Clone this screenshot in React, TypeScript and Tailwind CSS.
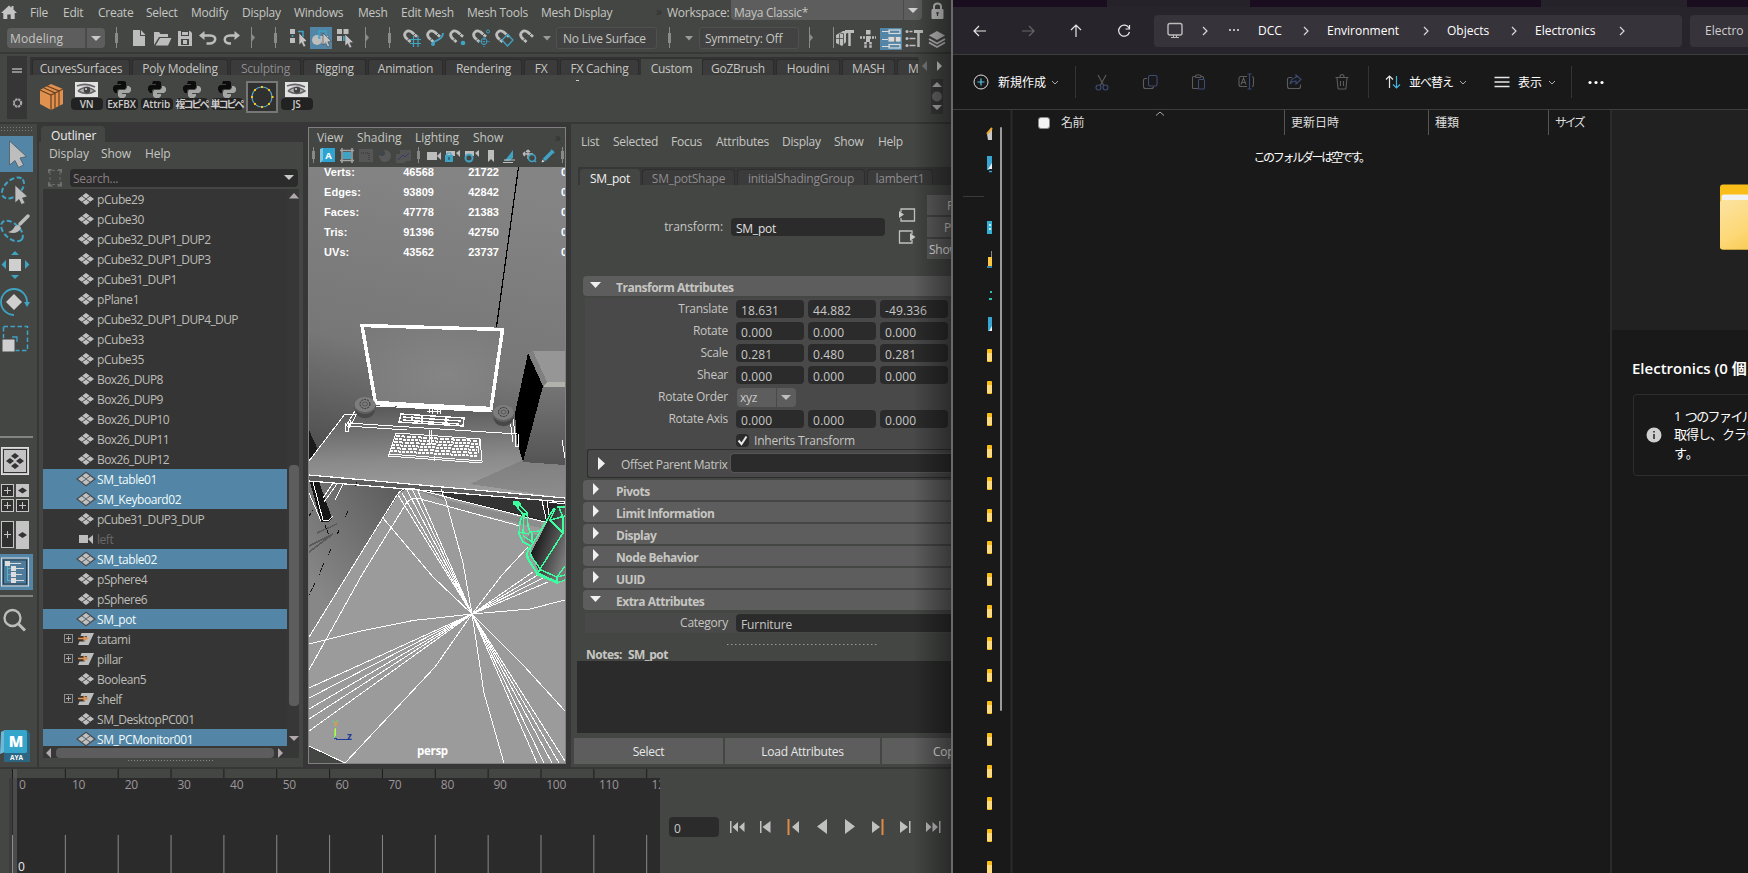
import React from "react";

type Kids = { children?: React.ReactNode };

/* Icon drawn in window coordinates: the view box starts at (x, y). */
function Ic({ x, y, w, h, children, className = "" }: { x: number; y: number; w: number; h: number; className?: string } & Kids) {
  return (
    <svg width={w} height={h} viewBox={`${x} ${y} ${w} ${h}`} className={"block shrink-0 " + className} fill="none">
      {children}
    </svg>
  );
}

const G = "#bdbdbd";
const T = "#3fa3c4";

/* ---------- Top menu ---------- */
const MENUS: [string, string][] = [
  ["File", "w-[33px]"], ["Edit", "w-[35px]"], ["Create", "w-[48px]"], ["Select", "w-[45px]"], ["Modify", "w-[51px]"],
  ["Display", "w-[52px]"], ["Windows", "w-[64px]"], ["Mesh", "w-[43px]"], ["Edit Mesh", "w-[66px]"], ["Mesh Tools", "w-[74px]"], ["Mesh Display", "w-[115px]"],
];

function MenuBar() {
  return (
    <div className="flex h-6 items-center">
      <Ic x={0} y={0} w={30} h={24}>
        <path d="M1 13 9 5.500l2.500 2.300V6h2v3.600L17 13h-2.300v6h-4v-4.500H7.300v4.500h-4v-6z" fill="#c4c4c4" />
      </Ic>
      {MENUS.map(([t, w]) => <span key={t} className={"shrink-0 pt-0.5 " + w}>{t}</span>)}
      <span className="w-[11px] shrink-0 text-[#2f2f2f]">»</span>
      <span className="w-[64px] shrink-0 pt-0.5">Workspace:</span>
      <div className="flex h-5 w-[191px] shrink-0 self-start items-center bg-[#5d5d5d] rounded-b-sm pl-[3px]">
        <span className="flex-1 pt-[6px]">Maya Classic*</span>
        <Ic x={903} y={0} w={19} h={20}><path d="M903.500 0v20" stroke="#4a4a4a" /><path d="M908 8h10l-5 5z" fill="#d0d0d0" /></Ic>
      </div>
      <Ic x={922} y={0} w={30} h={24}>
        <rect x={931.500} y={9} width={12} height={10} rx={1} fill="#c8c8c8" />
        <path d="M934 9V6.500a3.500 3 0 0 1 7 0V9" stroke="#c8c8c8" strokeWidth={2} />
        <path d="M937.500 12v4M936 13h3" stroke="#444" strokeWidth={1.200} />
      </Ic>
    </div>
  );
}

function Sep({ x }: { x: number }) {
  return <g fill="#8a8a8a"><rect x={x} y={27} width={1} height={21} /><rect x={x - 1} y={33} width={3} height={10} /></g>;
}
function Cursor({ x, y }: { x: number; y: number }) {
  return <path transform={`translate(${x} ${y})`} d="M0 0v12l2.600-2.300 2 4.300 2.200-1-2-4.200L8.500 8.500z" fill="#c4c4c4" stroke="#444" strokeWidth={0.600} />;
}
function Magnet({ x }: { x: number }) {
  return (
    <g transform={`translate(${x} 29.500)`}>
      <path d="M7.500 12.500L2.800 8.200C-0.500 3.500 4.500-0.500 8.800 2.600L14 7.200" stroke={G} strokeWidth={2.800} fill="none" />
      <path d="M4 11.200l2.600-2.600M10.200 6.300l2.600-2.600" stroke="#444" strokeWidth={0.900} />
    </g>
  );
}

function Toolbar() {
  return (
    <div className="flex h-7 items-center">
      <div className="ml-[7px] flex h-5 w-[98px] shrink-0 rounded-sm bg-[#5d5d5d]">
        <span className="flex flex-1 items-center pl-[3px] pt-0.5 tracking-[0.150px]">Modeling</span>
        <Ic x={85} y={28} w={20} h={20}><path d="M86 28v20" stroke="#444" strokeWidth={1.500} /><path d="M91 36h10l-5 5z" fill="#c8c8c8" /></Ic>
      </div>
      <Ic x={105} y={24} w={201} h={28}>
        <Sep x={116} />
        <path d="M133 30h7v6h5v10h-12z" fill={G} /><path d="M141 30l4.500 5H141z" fill={G} />
        <path d="M154 45V32h5l1.500 2H168v3h-9z" fill={G} /><path d="M160 38h11.500l-3.500 7.500H155.500z" fill={G} />
        <path d="M178 31h12l2 2v13h-14z" fill={G} /><rect x={181} y={31} width={8} height={5} fill="#444" /><rect x={182} y={32} width={6} height={3} fill={G} /><rect x={181} y={39} width={8} height={6} fill="#444" /><rect x={183} y={40} width={4} height={4} fill={G} />
        <path d="M203 35.500h7c8 0 6 8-.500 8h-3" stroke={G} strokeWidth={2.500} /><path d="M199 35.500l5.500-4.500v9z" fill={G} />
        <path d="M236 35.500h-6c-7 0-7 8 0 8h1" stroke={G} strokeWidth={2.500} /><path d="M240 35.500l-5.500-4.500v9z" fill={G} />
        <path d="M251.500 27v21" stroke="#8a8a8a" /><path d="M251 33l4 4.500-4 5z" fill="#8a8a8a" />
        <Sep x={275} />
        <g fill={G}><rect x={290} y={29} width={5} height={5} /><rect x={290} y={38} width={5} height={5} /></g>
        <path d="M298 31.500h5v6M292.500 35v2" stroke={T} strokeWidth={1.500} /><Cursor x={299} y={33} />
      </Ic>
      <Ic x={306} y={24} w={250} h={28}>
        <rect x={310} y={27} width={22} height={22} fill="#5285a6" />
        <circle cx={317} cy={40} r={5} fill={G} /><rect x={319} y={31} width={7} height={7} stroke={T} strokeWidth={1.500} /><path d="M320 36h8v8h-6z" fill={G} /><Cursor x={323} y={33} />
        <g fill={G}><rect x={337} y={29} width={5} height={5} /><rect x={343.500} y={29} width={5} height={5} /><rect x={337} y={36} width={5} height={5} /></g><rect x={343} y={36} width={4} height={5} fill={T} /><Cursor x={345} y={34} />
        <path d="M365.500 27v21" stroke="#8a8a8a" /><path d="M365 33l4 4.500-4 5z" fill="#8a8a8a" />
        <Sep x={389} />
        <Magnet x={403} /><path d="M410 39.500h11M410 43.500h11M413.500 36v11M418 36v11" stroke={T} strokeWidth={1.200} />
        <Magnet x={426} /><path d="M433 45c0-7 9-2 10-12" stroke={T} strokeWidth={2} /><circle cx={433} cy={44} r={2} fill={T} />
        <Magnet x={449} /><circle cx={463} cy={43} r={2.300} fill={T} />
        <Magnet x={472} /><circle cx={484} cy={41.500} r={3} stroke={T} fill="#444" /><circle cx={488} cy={31.500} r={1.500} stroke={T} /><path d="M484 36v11M478.500 41.500h11" stroke={T} strokeDasharray="1.500 1" />
        <Magnet x={495} /><path d="M502 40l5.500-5.500 5.500 5.500-5.500 6z" stroke={T} strokeWidth={1.300} />
        <Magnet x={519} />
        <path d="M543 36h8l-4 4.500z" fill="#9a9a9a" />
      </Ic>
      <div className="flex h-[22px] w-[101px] shrink-0 items-center rounded-[3px] border border-[#505050] bg-[#414241] pt-0.5 pl-[6px]">No Live Surface</div>
      <Ic x={657} y={24} w={42} h={28}><Sep x={669} /><path d="M685 36h8l-4 4.500z" fill="#9a9a9a" /></Ic>
      <div className="flex h-[22px] w-[100px] shrink-0 items-center rounded-[3px] border border-[#505050] bg-[#414241] pt-0.5 pl-[5px]">Symmetry: Off</div>
      <Ic x={799} y={24} w={153} h={28}>
        <path d="M809.500 27v21M833.500 27v21" stroke="#8a8a8a" /><path d="M809 33l4 4.500-4 5z" fill="#8a8a8a" />
        <path d="M836 35l7-4h6l-3 3v8l-4 4-6-3z" fill={G} /><path d="M836 38.500h7M839.500 34v11M843.500 34v11M839 32.500l5 1.500" stroke="#555" strokeWidth={0.900} /><path d="M845 31.500h9" stroke={G} strokeWidth={3} /><path d="M849.500 32v14" stroke={G} strokeWidth={2.500} />
        <rect x={866} y={30} width={4.500} height={4.500} fill={G} /><path d="M860 37.500h16" stroke={G} strokeWidth={2.500} strokeDasharray="2 1" /><path d="M868 36v6" stroke={G} strokeWidth={4} /><path d="M865.500 42v6M870.500 42v6" stroke={G} strokeWidth={2.500} strokeDasharray="2.500 0.800" />
        <rect x={880} y={28} width={22} height={22} fill="#5285a6" /><g stroke="#dadada" strokeWidth={1.200}><path d="M882 31.500h8M882 39.500h6M882 46.500h8" /><rect x={889} y={30} width={11} height={3.500} /><rect x={889} y={37.500} width={11} height={3.500} fill="#dadada" /><rect x={889} y={44.500} width={11} height={3.500} /></g><path d="M895 37v5" stroke="#444" />
        <g fill={G}><circle cx={907} cy={31.500} r={1.500} /><circle cx={907} cy={38.500} r={1.500} /><circle cx={907} cy={45.500} r={1.500} /></g><path d="M909.500 31.500h3M909.500 38.500h6M909.500 45.500h6" stroke={G} strokeWidth={1.500} /><path d="M914 31.500h9" stroke={G} strokeWidth={3} /><path d="M918.500 32v15" stroke={G} strokeWidth={2.500} />
        <path d="M929 35.500l8-4.500 8 4.500-8 4.500z" fill={G} /><path d="M929 39l8 4.500 8-4.500M929 42.500l8 4.500 8-4.500" stroke={G} strokeWidth={1.800} />
      </Ic>
    </div>
  );
}

/* ---------- Shelf ---------- */
const TABS: [string, string, string][] = [
  ["CurvesSurfaces", "w-[98px]", ""], ["Poly Modeling", "w-[96px]", ""], ["Sculpting", "w-[71px]", "text-[#8f8b8f]"], ["Rigging", "w-[63px]", ""],
  ["Animation", "w-[75px]", ""], ["Rendering", "w-[77px]", ""], ["FX", "w-[34px]", ""], ["FX Caching", "w-[79px]", ""], ["Custom", "w-[61px]", "active"],
  ["GoZBrush", "w-[72px]", ""], ["Houdini", "w-[64px]", ""], ["MASH", "w-[53px]", ""],
];

function Python({ label, jp }: { label: string; jp?: boolean }) {
  return (
    <div className="flex w-[35px] flex-col items-center">
      <svg width={18} height={18} viewBox="0 0 18 18">
        <path d="M5 1h6l2 1v5l-1 2H6L4 10v3H2L0 10V7l2-2h6V4H4z" fill="#0c0c0c" />
        <path d="M14 6h2l2 2v3l-2 2H9v1h4v2l-2 2H7l-2-2v-4l1-2h6l2-2z" fill="#a5a5a5" />
      </svg>
      <span className={"flex h-3 w-8 items-center justify-center whitespace-nowrap rounded-sm bg-[#222] font-bold text-[#ccc] text-[10px] " + (jp ? "tracking-[-2px] [font-family:'Noto_Sans_CJK_JP',sans-serif]" : "font-semibold tracking-[-0.100px]")}>{label}</span>
    </div>
  );
}
function Eye({ label }: { label: string }) {
  return (
    <div className="flex w-[35px] flex-col items-center">
      <svg width={23} height={16} viewBox="0 0 23 16" className="mt-0.5">
        <rect width={23} height={15} fill="#e2e2e2" />
        <path d="M2 4q9-4 18 1M3 9q8-7 17 0-8 5-17 0" stroke="#666" fill="#b5b5b5" strokeWidth={1.500} />
        <circle cx={12} cy={8} r={3.300} fill="#444" /><circle cx={11} cy={7} r={1} fill="#ddd" />
      </svg>
      <span className="flex h-3 w-8 items-center justify-center rounded-sm bg-[#222] text-[10px] font-semibold text-[#ccc]">{label}</span>
    </div>
  );
}

function Shelf() {
  return (
    <div className="flex h-[70px] border-t-2 border-[#383838]">
      <Ic x={0} y={54} w={30} h={68}>
        <rect x={7} y={56} width={20} height={63} fill="#363636" />
        <path d="M12 69h10M12 72h10" stroke="#aaa" strokeWidth={1.500} />
        <circle cx={17.500} cy={103} r={4} stroke="#aaa" strokeWidth={1.500} strokeDasharray="2.200 1" /><circle cx={17.500} cy={103} r={3.200} stroke="#aaa" />
      </Ic>
      <div className="w-[888px] shrink-0">
        <div className="mt-[3px] flex h-[18px] items-end bg-[#333333] pl-0.5">
          {TABS.map(([t, w, c]) =>
            c === "active" ? (
              <span key={t} className={"flex h-4 shrink-0 items-center justify-center bg-[#444644] pt-[3px] " + w}>{t}</span>
            ) : (
              <span key={t} className={"mr-0.5 flex h-4 shrink-0 items-center justify-center rounded-t-[3px] border-x border-t border-[#2c2c2c] bg-[#3a3b3a] pt-0.5 " + c + " " + w}>{t}</span>
            )
          )}
          <span className="flex h-4 flex-1 items-center rounded-tl-[3px] border-t border-l border-[#2c2c2c] bg-[#3a3b3a] pt-0.5 pl-2.5">M</span>
        </div>
        <div className="flex pt-[5px]">
          <Ic x={30} y={80} w={39} h={36}>
            <path d="M40 90l11-6 12 5v15l-12 6-11-6z" fill="#e0914f" />
            <path d="M40 90l11 5 12-6M44 88l11 5v15M47 86l12 5v15M51 95v15" stroke="#69401f" strokeWidth={1.200} />
          </Ic>
          <Eye label="VN" />
          <Python label="ExFBX" />
          <Python label="Attrib" />
          <Python label="複コピペ" jp />
          <Python label="単コピペ" jp />
          <Ic x={244} y={80} w={35} h={34}>
            <rect x={247} y={82} width={30} height={30} stroke="#777" strokeWidth={2} fill="#303030" />
            <circle cx={262} cy={97} r={10} stroke="#5a9fc0" strokeWidth={1.200} />
            <g fill="#f5c518"><rect x={261} y={86} width={2} height={2} /><rect x={261} y={106} width={2} height={2} /><rect x={251} y={96} width={2} height={2} /><rect x={271.500} y={96} width={2} height={2} /><rect x={254} y={89} width={2} height={2} /><rect x={268} y={89} width={2} height={2} /><rect x={254} y={103} width={2} height={2} /><rect x={268} y={103} width={2} height={2} /></g>
          </Ic>
          <Eye label="JS" />
          <Ic x={314} y={80} w={270} h={20}><path d="M576 80.500h3" stroke="#ccc" /></Ic>
        </div>
      </div>
      <Ic x={918} y={54} w={34} h={68}>
        <path d="M927 61v10l-5-5z" fill="#777" /><path d="M937 61v10l5-5z" fill="#ccc" />
        <rect x={931} y={79} width={12} height={35} fill="#383838" />
        <path d="M932 87h10l-5-5zM932 105h10l-5 5z" fill="#b0b0b0" /><circle cx={937} cy={96.500} r={5} fill="#666" />
      </Ic>
    </div>
  );
}

/* ---------- Tool column ---------- */
function ToolBox() {
  return (
    <Ic x={0} y={124} w={37} h={643} className="bg-[#444644]">
      <path d="M1 127.500h32M1 130.500h32" stroke="#777" strokeDasharray="1 2" />
      <rect y={136} width={33} height={36} fill="#5285a6" />
      <path d="M9.500 141v24l5.500-4.500 3.500 7 5-2.500-3.500-7 6.500-1.500z" fill={G} stroke="#4a5a66" strokeWidth={0.800} />
      <ellipse cx={13} cy={188} rx={13} ry={8} transform="rotate(-42 13 188)" stroke={T} strokeWidth={2} strokeDasharray="5 2.500" />
      <path d="M15 185v18l4-3.500 2.500 5 3.500-1.500-2.500-5 5-1.500z" fill={G} stroke="#444" strokeWidth={0.700} />
      <ellipse cx={12} cy={231} rx={13} ry={7.500} transform="rotate(42 12 231)" stroke={T} strokeWidth={2} strokeDasharray="5 2.500" />
      <path d="M20 224l8-8" stroke={G} strokeWidth={3.500} strokeLinecap="round" /><path d="M8 232q5-1 7-6l4-1 2 3c-2 5-8 6-13 4z" fill={G} />
      <rect x={9} y={259} width={12} height={12} fill="#cfcfcf" />
      <path d="M11 255h8l-4-4zM11 275h8l-4 4zM6 260v9l-4.500-4.500zM25 260v9l4.500-4.500z" fill={T} />
      <path d="M14 294l8 8-8 8-8-8z" fill="#cfcfcf" /><path d="M14 315a13 13 0 1 1 13-13" stroke={T} strokeWidth={1.800} /><path d="M24 302h6l-3 5z" fill={T} />
      <rect x={3.500} y={326.500} width={24} height={24} stroke={T} strokeWidth={1.500} strokeDasharray="4.500 2.500" /><rect x={2} y={339} width={13} height={13} fill="#cfcfcf" stroke="#444" /><path d="M12 337h5v5" stroke={T} strokeWidth={1.300} />
      <path d="M0 437h33" stroke="#999" strokeWidth={1.500} />
      <rect x={1.500} y={447.500} width={27} height={27} fill="#c4c4c4" stroke="#ddd" /><rect x={3.500} y={449.500} width={23} height={23} stroke="#333" />
      <path d="M15 453l4 3-4 3-4-3zM10 458l4 3-4 3-4-3zM20 458l4 3-4 3-4-3zM15 463l4 3-4 3-4-3z" fill="#333" />
      <g stroke="#c4c4c4" fill="#303030"><rect x={1.500} y={484.500} width={12} height={12} /><rect x={1.500} y={499.500} width={12} height={12} /><rect x={16.500} y={499.500} width={12} height={12} /><rect x={1.500} y={521.500} width={12} height={26} /></g>
      <rect x={16} y={484} width={13} height={13} fill="#c4c4c4" /><path d="M18 490.500l4.500-3 4.500 3-4.500 3z" fill="#333" />
      <rect x={16} y={521} width={13} height={28} fill="#c4c4c4" /><path d="M18 535l4.500-3 4.500 3-4.500 3z" fill="#333" />
      <path d="M4 490.500h7M7.500 487v7M4 505.500h7M7.500 502v7M19 505.500h7M22.500 502v7M4 534.500h7M7.500 531v7" stroke="#c4c4c4" />
      <rect y={554} width={33} height={36} fill="#5285a6" /><rect x={1.500} y={558} width={27} height={28} fill="#4f7c9b" stroke="#ddd" /><rect x={3.500} y={560} width={23} height={24} stroke="#2a3c4a" />
      <g stroke="#ddd"><path d="M9 563.500h12M15 568.500h9M15 574.500h7M15 580.500h9" /><path d="M7.500 566v15M7 574.500h5M7 580.500h5M7 568.500h5" stroke="#56b0cc" /></g>
      <g fill="#ddd"><rect x={5} y={561} width={5} height={5} /><rect x={11} y={566} width={5} height={5} /><rect x={11} y={572} width={5} height={5} /><rect x={11} y={578} width={5} height={5} /></g>
      <path d="M0 596h33" stroke="#999" strokeWidth={1.500} />
      <circle cx={12.500} cy={618} r={8} stroke={G} strokeWidth={2.300} /><path d="M18 623.500l7 7" stroke={G} strokeWidth={3} />
      <path d="M1 732l4-2v22l-5 2z" fill="#6db8d8" /><rect x={4} y={730} width={23} height={23} rx={1.500} fill="#35a5cc" /><path d="M27 730l3 3v29H4v-9h23z" fill="#2c6682" />
      <text x={16} y={747} fontFamily="Open Sans, sans-serif" fontWeight={800} fontSize={15} letterSpacing={0} textAnchor="middle" fill="#fff">M</text>
      <text x={16.500} y={759.500} fontFamily="Open Sans, sans-serif" fontWeight={700} fontSize={6.500} letterSpacing={0} textAnchor="middle" fill="#fff">AYA</text>
    </Ic>
  );
}

/* ---------- Outliner ---------- */
type Row = { n: string; s?: boolean; k?: "cam" | "grp" };
const ROWS: Row[] = [
  { n: "pCube29" }, { n: "pCube30" }, { n: "pCube32_DUP1_DUP2" }, { n: "pCube32_DUP1_DUP3" }, { n: "pCube31_DUP1" }, { n: "pPlane1" },
  { n: "pCube32_DUP1_DUP4_DUP" }, { n: "pCube33" }, { n: "pCube35" }, { n: "Box26_DUP8" }, { n: "Box26_DUP9" }, { n: "Box26_DUP10" },
  { n: "Box26_DUP11" }, { n: "Box26_DUP12" }, { n: "SM_table01", s: true }, { n: "SM_Keyboard02", s: true }, { n: "pCube31_DUP3_DUP" },
  { n: "left", k: "cam" }, { n: "SM_table02", s: true }, { n: "pSphere4" }, { n: "pSphere6" }, { n: "SM_pot", s: true }, { n: "tatami", k: "grp" },
  { n: "pillar", k: "grp" }, { n: "Boolean5" }, { n: "shelf", k: "grp" }, { n: "SM_DesktopPC001" }, { n: "SM_PCMonitor001", s: true },
];

function RowIcon({ r }: { r: Row }) {
  return (
    <svg width={54} height={20} viewBox="0 0 54 20" className="block shrink-0" fill="none">
      {r.k === "grp" && (
        <>
          <rect x={21.500} y={5.500} width={8} height={8} stroke="#8c8c8c" /><path d="M23 9.500h5M25.500 7v5" stroke="#aaa" />
          <path d="M38.500 4H51l-5.500 12H35l1.500-3.500h5L44 7h-6.500z" fill="#bdbdbd" /><path d="M35 9.500h8" stroke="#e0914f" strokeWidth={1.500} /><path d="M40.500 6.500l5 3-5 3z" fill="#e0914f" />
        </>
      )}
      {r.k === "cam" && <path d="M36 6h9v8h-9zM45 10l5-4v9z" fill="#bdbdbd" />}
      {!r.k && (
        <>
          {r.s && <path d="M43 2.500l10 7.500-10 7.500L33 10z" fill="#454c52" />}
          <path d="M43 4l3.700 2.700L43 9.400l-3.700-2.700zM38.700 7.200l3.900 2.800-3.900 2.800L35 10zM47.300 7.200L51 10l-3.700 2.800-3.900-2.800zM43 10.600l3.700 2.700L43 16l-3.700-2.700z" fill="#c0c0c0" />
        </>
      )}
    </svg>
  );
}

function Outliner() {
  return (
    <div className="flex w-[264px] flex-col bg-[#373737]">
      <div className="mt-0.5 ml-0.5 flex h-4 w-16 items-center rounded-t-sm bg-[#444644] pt-[3px] pl-[10px] text-[#eeeeee] tracking-[-0.100px]">Outliner</div>
      <div className="flex flex-1 flex-col bg-[#444644]">
        <div className="flex h-[22px] items-center pt-0.5 pl-[10px] tracking-[-0.100px]">
          <span className="w-[52px]">Display</span><span className="w-[44px]">Show</span><span>Help</span>
        </div>
        <div className="mt-[5px] mb-0.5 flex h-[18px]">
          <Ic x={39} y={169} w={31} h={18}>
            <path d="M50 172v11M60 172v11M52 170.500h7M52 184.500h7" stroke="#6a6a6a" strokeDasharray="3 2" />
            <path d="M48 168.500h5l-5 5zM57 168.500h5v5zM48 186.500h5l-5-5zM57 186.500h5v-5z" fill="#707070" />
          </Ic>
          <div className="flex w-[228px] items-center justify-between rounded-sm bg-[#2b2b2b] pl-[3px] text-[#8a7f85]">
            <span className="pt-0.5">Search...</span>
            <Ic x={282} y={169} w={16} h={18}><path d="M284 175h10l-5 5z" fill="#c8c8c8" /></Ic>
          </div>
        </div>
        <div className="ml-1 flex h-[557px] w-[256px] bg-[#353535]">
          <div className="w-[244px] overflow-hidden">
            {ROWS.map((r) => (
              <div key={r.n} className={"flex h-5 items-center tracking-[-0.450px] " + (r.s ? "bg-[#5285a6] text-[#f0fbfb]" : r.k === "cam" ? "text-[#696969]" : "text-[#bebeb8]") + (r.n.includes("DUP") ? " tracking-[-0.600px]" : "")}>
                <RowIcon r={r} />
                <span className="pt-px">{r.n}</span>
              </div>
            ))}
          </div>
          <div className="flex w-3 flex-col items-center bg-[#373737] pt-[4px] pl-0.5">
            <svg width={10} height={6} className="block"><path d="M0 5.500h10L5 0z" fill="#b0a8ac" /></svg>
            <div className="mt-[266px] h-[241px] w-[10px] rounded-[4px] bg-[#5d5d5d]" />
            <svg width={10} height={6} className="mt-auto mb-[4px] block"><path d="M0 0h10L5 5z" fill="#b0a8ac" /></svg>
          </div>
        </div>
        <div className="ml-1 flex h-3 w-[256px] items-center bg-[#373737] pt-0.5 pl-[3px]">
          <svg width={10} height={10}><path d="M5 0v10L0 5z" fill="#b0a8ac" /></svg>
          <div className="h-[10px] w-[218px] rounded-[4px] bg-[#5d5d5d]" />
          <svg width={12} height={10}><path d="M4 0v10l5-5z" fill="#b0a8ac" /></svg>
        </div>
        <svg width={264} height={8} className="block"><path d="M89 2.500h86" stroke="#888" strokeDasharray="1 2" /></svg>
      </div>
    </div>
  );
}

/* ---------- Viewport ---------- */
const HUD: [string, string, string][] = [
  ["Verts:", "46568", "21722"], ["Edges:", "93809", "42842"], ["Faces:", "47778", "21383"], ["Tris:", "91396", "42750"], ["UVs:", "43562", "23737"],
];

function Speaker({ x, y }: { x: number; y: number }) {
  return (
    <g transform={`translate(${x} ${y})`} shapeRendering="auto">
      <path d="M-10.500-4Q-11 6-6 9q6 3.500 12 0 5-3 4.500-13z" fill="#484848" />
      <ellipse cy={-2.500} rx={10.500} ry={8} fill="#7d7d7d" /><path d="M-10 0q10 9 20 0v2q-10 9-20 0z" fill="#606060" />
      <ellipse cy={-3.500} rx={5} ry={4.500} stroke="#2e2e2e" strokeDasharray="2 1" /><ellipse cy={-3.500} rx={2.500} ry={2} stroke="#555" />
    </g>
  );
}

function Scene() {
  const keys = [0, 1, 2, 3, 4, 5];
  return (
    <svg width={256} height={597} viewBox="309 167 256 597" className="block" fill="none" shapeRendering="crispEdges">
      <defs>
        <linearGradient id="wall" x1="0.400" y1="0" x2="0.200" y2="1"><stop offset="0" stopColor="#848484" /><stop offset="0.600" stopColor="#777" /><stop offset="1" stopColor="#4c4c4c" /></linearGradient>
        <radialGradient id="scr" cx="0.600" cy="0.600" r="0.800"><stop offset="0" stopColor="#858585" /><stop offset="1" stopColor="#797979" /></radialGradient>
        <linearGradient id="desk" x1="0.300" y1="0" x2="0.400" y2="1"><stop offset="0" stopColor="#565656" /><stop offset="0.600" stopColor="#8a8a8a" /><stop offset="1" stopColor="#a0a0a0" /></linearGradient>
        <linearGradient id="floor" x1="1" y1="0" x2="0" y2="0.600"><stop offset="0" stopColor="#2c2c2c" /><stop offset="0.450" stopColor="#555" /><stop offset="1" stopColor="#878787" /></linearGradient>
        <linearGradient id="box" x1="0" y1="0" x2="0" y2="1"><stop offset="0" stopColor="#757575" /><stop offset="1" stopColor="#545454" /></linearGradient>
        <linearGradient id="pot" x1="0" y1="0" x2="1" y2="0.700"><stop offset="0.200" stopColor="#0c0c0c" /><stop offset="1" stopColor="#7a7a7a" /></linearGradient>
      </defs>
      <rect x={309} y={167} width={256} height={300} fill="url(#wall)" />
      <path d="M309 430l10 22-10 12z" fill="#1a1a1a" />
      <path d="M518.500 167L496.500 327" stroke="#000" strokeWidth={1.200} />
      <rect x={309} y={462} width={256} height={200} fill="url(#floor)" />
      <path d="M345 414l30-11 118 9 25 14 10 32h37v40L309 475v-13z" fill="url(#desk)" />
      <path d="M565 441v57L470 484z" fill="#6c6c6c" opacity={0.400} />
      <path d="M528 353l15 33-20 76-6-20-2-29z" fill="#000" />
      <path d="M528 353l5-2h32v32h-18l-4 3z" fill="#969696" /><path d="M528 353l5-2 14 31-4 4z" fill="#808080" />
      <path d="M543 386l4-4h18v6h-20z" fill="#b2b2ac" /><path d="M543 387h22v78l-42-3z" fill="url(#box)" />
      <path d="M309 475l256 23v4L309 481z" fill="#5d5d5d" />
      <path d="M310 482h9l13 36-3 4h-8z" fill="#161616" />
      <path d="M317 533l20-9M309 552l24-18M309 546l24-12" stroke="#5a5a5a" strokeWidth={1.500} />
      <path d="M357 482l-2 4M348 511l-3 6M339 530l-2 5M331 549l-3 6M324 563l-5 12M315 583l-6 12M325 525l4 11M309 516l4-6" stroke="#111" strokeDasharray="4 2" />
      <path d="M398 495q5-7 17-6l130 33 20 3v239H345l-36-18V637z" fill="#9b9b9b" />
      <path d="M416 490l124 11 25 5v22l-20-6z" fill="#262626" /><path d="M415 489l130 11v20z" fill="#333" />
      <path d="M416 490l28 4 2 7z" fill="#888" />
      <path d="M445 500l96 22 0 6-90-20z" fill="#8c8c8c" />

      <path d="M362 325.500l140.500 4-11.500 79L375.500 403z" fill="url(#scr)" stroke="#fff" strokeWidth={3.500} />
      <path d="M375 403l116 6.500" stroke="#fff" strokeWidth={4.500} />

      <g stroke="#fff">
        <path d="M309 461l36-47h11M376 406l116 6M347 423l170 11M347 426l60 4M356 409l-10 17M359 410l-10 18M345 423v8h3v-10M351 420l-3 12M512 411l4 30M509 412l4 30M518 434v12h-3v-12" />
        <path d="M309 475l256 23M309 481l256 21" strokeWidth={1.200} />
        <path d="M429 406v7M432 406v8M437 407v7M440 407v7M427 411h14M429 430v14M431 430v14" />
        <path d="M401 414l63 4-1 8-64-4zM403 417l58 4M403 420l56 4M422 415v8M446 417v8M412 416v5" strokeWidth={1.400} />
        <path d="M396 433l84 6 2 22-93-7zM389 454l-1 2 94 7M480 439l-2 14M434 456v5" />
        {keys.map((i) => (
          <path key={i} d={`M${396 - i * 1.200} ${436 + i * 3}l${82 + i} 5`} strokeWidth={2} strokeDasharray={i % 2 ? "3 1" : "4 1.500"} />
        ))}
        <path d="M313 482l10 38h6l4-4M309 493l12 28M337 484l-13 18M333 483l-10 15M343 484l-8 16" />
        <path d="M542 501l5 22M547 501l2 14M549 502l16 2M562 440l3 18" />
        <path d="M309 637L397 495q5-7 12-7l6 1 130 33M309 670l54-97 41-66q4-9 13-9l103 28M443 495l-2-6" />
        <path d="M472 614l-39-37-50-59M472 614l-74-119M472 614l-70-121M472 614l-65-124M472 614l-60-125M472 614l-55-125M472 614l-9-51-17-62-3-6" />
        <path d="M472 614l30-39 26-28M472 614l61-42M472 614l66-39M472 614l71-36M472 614l76-32M472 614l58-5 35-9" />
        <path d="M472 614l51 51 42 46M472 614l65 149M472 614l72 149M472 614l80 149M472 614l87 149M472 614l93 147M472 614l12 79 20 70" />
        <path d="M472 614l-37 53-90 96-36-17M472 614l-163 74M472 614l-163 84M472 614l-163 95M472 614L309 719M472 614L309 731M472 614l-59 6.500-54 11L309 644" />
      </g>

      <Speaker x={365} y={407.500} />
      <Speaker x={503.500} y={415.500} />

      <path d="M555 507l10-2v76l-8 0-16-5-10-23z" fill="url(#pot)" />
      <path d="M531 533l7 3-6 10-8-6z" fill="#888" />
      <g stroke="#3dffa0" strokeWidth={1.500}>
        <path d="M514 503l4 5 5 6-3 8-1 12 4 8 8 4M514 503l5 1 8 9 1 13 2 6 9-1M524 514l-1 20M519 532l10 2M521 513l6 1" />
        <path d="M513 503h5l2 3" strokeWidth={4} />
        <path d="M554 508l-7 12-9 15-8 13 1 8 10 14 16 7 8-2M557 507h8M555 509l-5 11 13 13M551 520l14-4M563 533l-23 36M559 507l4 11v15M530 548l-3 5 2 8 9 14 19 8 8-3M540 569l-3 6M557 577v7M557 577l8-11M523 536l8 5M532 533v10" />
        <path d="M528 548l-1 9 10 16 20 9" strokeWidth={2} />
      </g>

      <path d="M334.500 729v9" stroke="#5dff5d" /><path d="M335.500 728v8" stroke="#e5e04a" /><path d="M334 738.500l5 1h9" stroke="#223a9a" />
      <path d="M332 720l3 3 3-3M335 723v3" stroke="#4dd9a0" /><path d="M334 721l4 5M338 721l-4 5" stroke="#e8963c" />
    </svg>
  );
}

function Viewport() {
  return (
    <div className="mt-[3px] mb-[3px] flex w-[258px] flex-col border border-[#808080] bg-[#444644]">
      <div className="flex h-[18px] items-center overflow-hidden pt-0.5 pl-2 tracking-[-0.050px]">
        <span className="w-[40px] shrink-0">View</span><span className="w-[58px] shrink-0">Shading</span><span className="w-[58px] shrink-0">Lighting</span><span className="w-[82px] shrink-0">Show</span><span className="text-[#2f2f2f]">»</span>
      </div>
      <Ic x={309} y={146} w={256} h={21}>
        <g fill="#888"><rect x={313} y={147} width={1} height={16} /><rect x={312} y={151} width={3} height={8} /><rect x={418} y={147} width={1} height={16} /><rect x={417} y={151} width={3} height={8} /><rect x={562} y={147} width={1} height={16} /><rect x={561} y={151} width={3} height={8} /></g>
        <path d="M320 149l3-1h12v14h-15z" fill="#2ea3cf" /><path d="M320 149l3-1v12l-3 3z" fill="#7cc4e0" /><text x={328.500} y={158.500} fontSize={9.500} fontWeight={700} letterSpacing={0} fontFamily="Open Sans, sans-serif" textAnchor="middle" fill="#fff">A</text>
        <rect x={343} y={152} width={8} height={7} fill={T} /><path d="M340 150.500h14M340 160.500h14M342 148v15M352 148v15" stroke="#a5a5a5" strokeWidth={1.500} />
        <rect x={359} y={149} width={14} height={13} fill="#565656" /><path d="M361 153h8v8" stroke="#333" strokeDasharray="1 1" />
        <circle cx={385} cy={156} r={6} fill="#585858" /><circle cx={382} cy={153} r={3} fill="#40454a" />
        <path d="M400 150h11v11h-4l-3 2h-8v-9h4z" fill="#545454" /><path d="M398 160l5-5 2 2 4-4" stroke="#353a6a" />
        <path d="M427 152h10v8h-10zM437 156l4-4v8z" fill={G} />
        <path d="M446 151h9v5h-9zM456 153l4-3v7z" fill={G} /><rect x={445} y={155} width={8} height={7} fill={T} /><path d="M447 155v-2h4v2" stroke={T} /><path d="M449 157v3" stroke="#333" />
        <path d="M465 151h9v5h-9zM475 153l4-3v7z" fill={G} /><circle cx={469} cy={158} r={3.500} stroke={T} strokeWidth={2} fill="#444" />
        <path d="M488 150h6v12l-3-3-3 3z" fill={G} />
        <path d="M507 158l6-8v8l-4 3h-5z" fill={T} /><path d="M504 160h11M503 162.500h10" stroke={G} />
        <path d="M523 154h10M528 150v9M523 154l2-2M523 154l2 2M528 150l-2 2M528 150l2 2" stroke={G} strokeWidth={1.300} /><circle cx={532} cy={158} r={3.500} stroke={T} strokeWidth={1.500} /><path d="M534 160l2 2" stroke={T} strokeWidth={1.500} />
        <path d="M544 160l8-8" stroke={T} strokeWidth={3.500} /><path d="M541.500 162.500l1-3 2 2z" fill="#ddd" /><path d="M551 150l3 3" stroke={T} strokeWidth={2} />
      </Ic>
      <div className="relative h-[597px] overflow-hidden">
        <Scene />
        <div className="absolute inset-x-0 top-[-5px] text-[11px] font-bold tracking-[0.050px] text-white [font-family:'Liberation_Sans',sans-serif]">
          {HUD.map(([a, b, c]) => (
            <div key={a} className="flex h-5 items-center whitespace-pre">
              <span className="w-[75px] shrink-0 pl-[15px]">{a}</span><span className="w-[50px] shrink-0 text-right">{b}</span><span className="w-[65px] shrink-0 text-right">{c}</span><span className="shrink-0 pl-[62px]">0</span>
            </div>
          ))}
        </div>
        <span className="absolute top-[576px] left-[108px] text-[11.500px] font-bold text-white tracking-[-0.300px]">persp</span>
        <span className="absolute left-[38px] top-[561px] text-[10px] font-bold text-[#223a9a]">z</span>
      </div>
    </div>
  );
}

/* ---------- Attribute editor ---------- */
function Field({ children, className = "" }: { className?: string } & Kids) {
  return <div className={"flex h-[18px] items-center rounded-sm bg-[#2b2b2b] pl-[5px] pt-[3px] text-[#c8c8c8] " + className}>{children}</div>;
}
function Label({ children }: Kids) {
  return <span className="w-[151px] pr-2 text-right">{children}</span>;
}
function AttrRow({ n, v }: { n: string; v: string[] }) {
  return (
    <div className="mb-1 flex h-[18px] items-center">
      <Label>{n}</Label>
      <div className="flex gap-1">{v.map((t, i) => <Field key={i} className="w-[68px] tracking-[0.100px]">{t}</Field>)}</div>
    </div>
  );
}
function Head({ t, open }: { t: string; open?: boolean }) {
  return (
    <div className="mb-0.5 ml-[12px] flex h-5 shrink-0 items-center rounded-l-sm bg-[#5d5d5d] font-bold tracking-[-0.500px]">
      <svg width={33} height={20}>{open ? <path d="M7 6h11l-5.500 6z" fill="#f0f0f0" /> : <path d="M10 3v12l6-6z" fill="#f0f0f0" />}</svg>
      <span className="pt-[3px]">{t}</span>
    </div>
  );
}

function Attributes() {
  const btn = "flex items-center justify-center bg-[#5d5d5d] pt-0.5 text-[#e8e8e8]";
  return (
    <div className="flex w-[382px] flex-col overflow-hidden bg-[#444644]">
      <div className="flex h-[43px] shrink-0 items-center pb-[7px] pl-[10px]">
        <span className="w-[32px]">List</span><span className="w-[58px]">Selected</span><span className="w-[45px]">Focus</span><span className="w-[66px]">Attributes</span><span className="w-[52px]">Display</span><span className="w-[44px]">Show</span><span>Help</span>
      </div>
      <div className="ml-[7px] flex h-[18px] shrink-0 items-end gap-0.5 bg-[#373737] pl-0.5 text-[#8f8b8f]">
        <span className="flex h-4 w-[60px] items-center justify-center rounded-t-sm bg-[#444644] pt-[3px] text-[#f2f2f2]">SM_pot</span>
        <span className="flex h-4 w-[93px] items-center justify-center rounded-t-sm border-x border-t border-[#2e2e2e] bg-[#3a3b3a] pt-0.5">SM_potShape</span>
        <span className="flex h-4 w-[128px] items-center justify-center rounded-t-sm border-x border-t border-[#2e2e2e] bg-[#3a3b3a] pt-0.5">initialShadingGroup</span>
        <span className="flex h-4 w-[66px] items-center justify-center rounded-t-sm border-x border-t border-[#2e2e2e] bg-[#3a3b3a] pt-0.5">lambert1</span>
      </div>
      <div className="flex h-[91px] shrink-0">
        <div className="flex h-[84px] w-[314px] shrink-0 items-center">
          <span className="w-[160px] pr-2 text-right tracking-[-0.050px]">transform:</span>
          <Field className="flex-1 text-[#e0e0e0]">SM_pot</Field>
        </div>
        <Ic x={885} y={185} w={42} h={75}>
          <g stroke="#c0c0c0" strokeWidth={1.300}><path d="M901 212v-3h13.500v12H901v-3M912 234v-3h-12.500v12H912v-3" /></g>
          <path d="M899 211v7l5-3.500zM910 233v8l5.500-4z" fill="#c8c8c8" />
        </Ic>
        <div className="mt-[10px] flex w-[85px] shrink-0 flex-col gap-0.5">
          <div className={btn + " h-5 text-[#c8d0c8]! justify-start! pl-5"}>Focus</div><div className={btn + " h-5 text-[#c8d0c8]! justify-start! pl-[17px]"}>Presets</div><div className={btn + " h-5 justify-start! pl-0.5"}>Show</div>
        </div>
      </div>
      <Head t="Transform Attributes" open />
      <div className="ml-[14px] h-[151px] shrink-0 bg-[#494949] pt-0.5">
        <AttrRow n="Translate" v={["18.631", "44.882", "-49.336"]} />
        <AttrRow n="Rotate" v={["0.000", "0.000", "0.000"]} />
        <AttrRow n="Scale" v={["0.281", "0.480", "0.281"]} />
        <AttrRow n="Shear" v={["0.000", "0.000", "0.000"]} />
        <div className="mb-1 flex h-[18px] items-center">
          <Label>Rotate Order</Label>
          <div className="ml-px flex h-[19px] w-[59px] items-center justify-between rounded-sm bg-[#5d5d5d] pl-[3px] text-[#c8c8c8]">
            <span className="pt-0.5">xyz</span>
            <svg width={20} height={19}><path d="M0.500 0v19" stroke="#494949" /><path d="M5 7h10l-5 5z" fill="#bdbdbd" /></svg>
          </div>
        </div>
        <AttrRow n="Rotate Axis" v={["0.000", "0.000", "0.000"]} />
        <div className="flex h-4 items-center">
          <svg width={13} height={13} className="mt-px mr-[5px] ml-[151px] rounded-sm bg-[#2b2b2b]" fill="none"><path d="M2.500 6.500l3 3.500 5-7.500" stroke="#e8e8e8" strokeWidth={2} /></svg>
          <span className="pt-px tracking-[-0.200px]">Inherits Transform</span>
        </div>
      </div>
      <div className="mb-0.5 ml-[16px] flex h-[29px] shrink-0 items-center rounded-l-[3px] border border-r-0 border-[#2d2d2d] bg-[#494949]">
        <svg width={33} height={26} className="shrink-0"><path d="M10 6v13l7-6.500z" fill="#f0f0f0" /></svg>
        <span className="w-[109px] shrink-0 pt-0.5 tracking-[-0.350px]">Offset Parent Matrix</span>
        <div className="mb-0.5 h-[20px] flex-1 rounded-l-sm border border-r-0 border-[#555] bg-[#2b2b2b]" />
      </div>
      {["Pivots", "Limit Information", "Display", "Node Behavior", "UUID"].map((t) => <Head key={t} t={t} />)}
      <Head t="Extra Attributes" open />
      <div className="mt-[1px] ml-[14px] flex h-5 shrink-0 items-center bg-[#494949]"><Label>Category</Label><Field className="flex-1 tracking-[-0.100px]">Furniture</Field></div>
      <svg width={382} height={13} className="block shrink-0"><path d="M156 11.500h152" stroke="#999" strokeDasharray="1.500 2.500" /></svg>
      <div className="flex h-[15px] shrink-0 items-center gap-[6px] pt-[3px] pl-[15px] font-bold tracking-[-0.500px]"><span>Notes:</span><span>SM_pot</span></div>
      <div className="ml-[6px] h-[72px] shrink-0 bg-[#2b2b2b]" />
      <div className="mt-[5px] mr-[-84px] ml-[3px] flex h-[26px] shrink-0 gap-0.5">
        <div className={btn + " w-[149px] shrink-0"}>Select</div><div className={btn + " w-[155px] shrink-0"}>Load Attributes</div><div className={btn + " w-[152px] shrink-0"}>Copy Tab</div>
      </div>
    </div>
  );
}

/* ---------- Timeline ---------- */
function Timeline() {
  const ticks = Array.from({ length: 13 }, (_, i) => 12.500 + i * 52.850);
  return (
    <div className="flex h-[106px] shrink-0 border-t-2 border-[#373737] bg-[#444644]">
      <div className="relative ml-[9px] h-[104px] w-[651px] overflow-hidden">
        <svg width={651} height={104} viewBox="9 769 651 104" className="block">
          <rect x={9} y={778} width={651} height={100} fill="#2b2b2b" />
          <rect x={9} y={778} width={3} height={100} fill="#3c3c3c" />
          <rect x={13} y={769} width={4} height={110} fill="#5a5a5a" opacity={0.700} />
          {ticks.map((x, i) => <g key={i}><path d={`M${x} 769v9`} stroke="#1c1c1c" strokeWidth={1} /><path d={`M${x} 835v40`} stroke="#8a8a8a" strokeWidth={1} /></g>)}
        </svg>
        <div className="absolute top-[8px] left-[10px] flex text-[#9c969c]">
          {["0", "10", "20", "30", "40", "50", "60", "70", "80", "90", "100", "110", "120"].map((t) => <span key={t} className={"shrink-0 " + (t === "0" ? "w-[53px]" : "w-[52.700px]")}>{t}</span>)}
        </div>
        <span className="absolute top-[90px] left-[9px] text-[#ececec]">0</span>
      </div>
      <Field className="mt-[48px] ml-[9px] h-[20px]! w-[50px]">0</Field>
      <Ic x={719} y={769} w={230} h={104}>
        <g fill="#c0c0c0">
          <path d="M730 821h1.500v12H730zM738 822v10l-5.500-5zM744.500 822v10l-5.500-5z" />
          <path d="M760 821h1.500v12H760zM770.500 821v12l-8-6z" />
          <path d="M799 821v12l-7-6zM827 819v15l-10-7.500zM845 819v15l10-7.500zM872 821v12l8-6z" />
          <path d="M900 821v12l8-6zM909 821h1.500v12H909zM926 822v10l5.500-5zM932.500 822v10l5.500-5zM939 821h1.500v12H939z" />
        </g>
        <path d="M788.500 819v16M882.500 819v16" stroke="#e08a45" strokeWidth={2} />
      </Ic>
    </div>
  );
}

/* ---------- File explorer ---------- */
function Chev({ w, down }: { w: string; down?: boolean }) {
  return (
    <span className={"flex shrink-0 items-center justify-center " + w}>
      <svg width={10} height={10} fill="none">{down ? <path d="M2 4l3 3 3-3" stroke="#aaa" /> : <path d="M3 1l4 4-4 4" stroke="#d8d8d8" strokeWidth={1.200} />}</svg>
    </span>
  );
}

function Explorer() {
  const W = "#e6e6e6", D = "#5c5c5c", B = "#3d4b75";
  return (
    <div className="flex h-full w-[795px] flex-col overflow-hidden bg-[#191919] text-white [font-family:'Open_Sans','Noto_Sans_CJK_JP',sans-serif]">
      <div className="flex h-[7px] bg-[#1a0d1f]"><div className="ml-[154px] w-[143px] bg-[#262229]" /><div className="ml-[291px] w-[146px] bg-[#262229]" /></div>
      <div className="flex h-12 shrink-0 items-center border-b border-[#3d3d3d] bg-[#28242b] text-[12px]">
        <Ic x={953} y={7} w={201} h={47}>
          <g strokeWidth={1.200}>
            <path d="M986 31h-12M979 26l-5 5 5 5" stroke={W} /><path d="M1022 31h12M1029 26l5 5-5 5" stroke="#666" />
            <path d="M1076 37V25M1071 30l5-5 5 5" stroke={W} /><path d="M1129 28a5.500 5.500 0 1 0 .5 4M1129.500 25v4h-4" stroke={W} />
          </g>
        </Ic>
        <div className="flex h-8 w-[528px] shrink-0 items-center rounded bg-[#37333a]">
          <Ic x={1154} y={15} w={42} h={32}><rect x={1168} y={23.500} width={14} height={11.500} rx={2} stroke="#bbb" strokeWidth={1.400} /><path d="M1171 37.500h8M1173.500 35v2M1176.500 35v2" stroke="#bbb" /></Ic>
          <Chev w="w-[18px]" />
          <Ic x={1214} y={15} w={44} h={32}><g fill={W}><circle cx={1230} cy={30} r={1} /><circle cx={1234} cy={30} r={1} /><circle cx={1238} cy={30} r={1} /></g></Ic>
          <span className="w-[27px] pt-px">DCC</span><Chev w="w-[42px]" /><span className="w-[78px] pt-px">Environment</span><Chev w="w-[42px]" /><span className="w-[46px] pt-px">Objects</span><Chev w="w-[42px]" /><span className="w-[65px] pt-px">Electronics</span><Chev w="w-[44px]" />
        </div>
        <div className="ml-2 flex h-8 flex-1 items-center rounded-l bg-[#37333a] pt-px pl-[15px] whitespace-nowrap text-[#cfcfcf]"><span>Electro</span></div>
      </div>
      <div className="flex h-[55px] shrink-0 items-center border-b border-[#3d3d3d] text-[12px]">
        <Ic x={953} y={56} w={45} h={53}><circle cx={981} cy={82} r={7} stroke="#ddd" /><path d="M981 78.500v7M977.500 82h7" stroke="#55c5e8" strokeWidth={1.200} /></Ic>
        <span className="w-[49px] shrink-0 pt-0.5">新規作成</span><Chev w="w-[16px]" down />
        <Ic x={1063} y={56} w={346} h={53}>
          <path d="M1075.500 66v32M1368.500 66v32" stroke="#333" />
          <g stroke={D} strokeWidth={1.100}>
            <path d="M1098 75l6 11M1106 75l-6 11" /><circle cx={1098.500} cy={87.500} r={2.500} stroke={B} /><circle cx={1105.500} cy={87.500} r={2.500} stroke={B} />
            <path d="M1147 78.500h-1.500q-2 0-2 2v6q0 2 2 2h6q2 0 2-2" /><rect x={1148.500} y={75.500} width={8.500} height={10.500} rx={1.500} stroke={B} />
            <path d="M1198 88.500h-4.500q-1 0-1-1v-10q0-1 1-1h2M1203.500 79v-1.500q0-1-1-1h-1.500" /><rect x={1195.500} y={75} width={5.500} height={2.500} rx={1} /><rect x={1198.500} y={79.500} width={6} height={9.500} rx={1} stroke={B} />
            <path d="M1247 76.500h-6q-2 0-2 2v6q0 2 2 2h6M1241 84.500l2.500-6.500 2.500 6.500M1242 82.500h3M1252 76.500q1.500 0 1.500 2v6q0 2-1.500 2" /><path d="M1249.500 74.500v14M1247.500 74h4M1247.500 89h4" stroke={B} />
            <path d="M1292 77.500h-2.500q-2 0-2 2v7q0 2 2 2h9q2 0 2-2v-2" /><path d="M1296 75l5 4.500-5 4.500v-3q-4 0-6 3 1-6 6-6.500z" stroke={B} />
            <path d="M1335.500 77.500h13M1337 78l1 10q0 1 1 1h6q1 0 1-1l1-10M1340 77q0-2.500 2-2.500t2 2.500M1340.500 81v5M1343.500 81v5" />
          </g>
          <path d="M1389.500 88V76M1386 79.500l3.500-3.500 3.500 3.500" stroke={W} strokeWidth={1.200} /><path d="M1396.500 76v12M1393 84.500l3.500 3.500 3.500-3.500" stroke="#45b4dc" strokeWidth={1.200} />
        </Ic>
        <span className="w-[44px] shrink-0 whitespace-nowrap pt-0.5 tracking-[-1px]">並べ替え</span><Chev w="w-[19px]" down />
        <Ic x={1472} y={56} w={46} h={53}><path d="M1494.500 77.500h15M1494.500 82h15M1494.500 86.500h15" stroke={W} strokeWidth={1.300} /></Ic>
        <span className="w-[25px] shrink-0 pt-0.5">表示</span><Chev w="w-[17px]" down />
        <Ic x={1560} y={56} w={50} h={53}><path d="M1571.500 66v32" stroke="#333" /><g fill="#fff"><circle cx={1590} cy={82.500} r={1.600} /><circle cx={1596} cy={82.500} r={1.600} /><circle cx={1602} cy={82.500} r={1.600} /></g></Ic>
      </div>
      <div className="flex flex-1">
        <Ic x={953} y={110} w={60} h={763}>
          <path d="M987 134l5-6v12h-4z" fill="#c9c9c9" /><path d="M987 134l5-6" stroke="#f0a830" strokeWidth={2} />
          <path d="M987 156h5v9l-3 5h-2z" fill="#39a5d2" /><path d="M992 163v6h-4z" fill="#eee" /><path d="M989 171.500h3" stroke="#39a5d2" strokeWidth={1.500} />
          <path d="M963 196.500h21" stroke="#3a3a3a" />
          <rect x={987} y={221} width={5} height={13} fill="#35b0d5" /><path d="M989 225h2M989 229h2" stroke="#fff" strokeWidth={1.500} />
          <rect x={988} y={257} width={4} height={9} fill="#fcc843" /><path d="M991.500 251v6" stroke="#888" /><rect x={987} y={266} width={5} height={2} fill="#2f7fa8" />
          <path d="M990 292h2M989 299h3" stroke="#2fc0b0" strokeWidth={2} />
          <rect x={988} y={317} width={4} height={14} fill="#39a5d2" /><path d="M992 326v5h-3z" fill="#eee" />
          {Array.from({ length: 17 }, (_, i) => <g key={i}><rect x={987} y={349 + i * 32} width={5} height={13} rx={0.800} fill="#fbbe17" /><rect x={987} y={353 + i * 32} width={5} height={8} fill="#fdda7b" /></g>)}
          <rect x={1000} y={127} width={2} height={584} rx={1} fill="#9a9a9a" />
          <rect x={1010.500} y={110} width={2} height={763} fill="#2b2b2b" />
        </Ic>
        <div className="w-[597px] shrink-0 text-[12px]">
          <div className="flex h-[25px] items-center text-[#dedede]">
            <div className="mt-px ml-[25px] h-[12px] w-[12px] rounded-[3px] border border-[#888] bg-[#f3f3f3]" />
            <span className="ml-[11px] w-[91px] pt-px tracking-[-0.500px]">名前</span>
            <svg width={12} height={24} className="mr-[117px]" fill="none"><path d="M4 4.500l4-3.500 4 3.500" stroke="#aaa" /></svg>
            <span className="ml-[3px] flex h-[25px] w-[144px] items-center border-l border-[#555] pt-px pl-[6px]">更新日時</span>
            <span className="flex h-[25px] w-[120px] items-center border-l border-[#555] pt-px pl-[6px]">種類</span>
            <span className="flex h-[25px] items-center border-l border-[#555] pt-px pl-[6px] tracking-[-2.500px]">サイズ</span>
          </div>
          <div className="mt-[14px] pr-[1px] text-center tracking-[-2.300px]">このフォルダーは空です。</div>
        </div>
        <div className="flex-1 border-l-2 border-[#2b2b2b]">
          <div className="h-[220px] bg-[#212121]">
            <Ic x={1612} y={110} w={136} h={220}>
              <defs><linearGradient id="fold" x1="0" y1="0" x2="0.500" y2="1"><stop offset="0" stopColor="#fbe3a2" /><stop offset="0.700" stopColor="#fdd876" /><stop offset="1" stopColor="#f9ce5c" /></linearGradient></defs>
              <rect x={1720} y={184.500} width={60} height={65} rx={3} fill="#fabe1b" /><rect x={1721.500} y={194.500} width={60} height={10} rx={2} fill="#f2f2f2" /><path d="M1720 202l2-2h40v49.500h-39a3 3 0 0 1-3-3z" fill="url(#fold)" />
            </Ic>
          </div>
          <div className="mt-[27px] ml-5 text-[15px] font-semibold whitespace-nowrap">Electronics (0 個</div>
          <div className="mt-[14px] ml-[21px] flex h-[82px] w-[240px] items-center rounded border border-[#2e2e2e]">
            <svg width={16} height={16} className="mr-[12px] ml-[12px] shrink-0"><circle cx={8} cy={8} r={7.500} fill="#cfcfcf" /><path d="M8 7v5M8 4v1.600" stroke="#222" strokeWidth={1.500} /></svg>
            <div className="text-[13px] leading-[18.500px] whitespace-nowrap"><div className="tracking-[-1.600px]"><span className="tracking-normal">1 </span>つのファイル</div><div className="tracking-[-1px]">取得し、クラウ</div><div>す。</div></div>
          </div>
        </div>
      </div>
    </div>
  );
}

export default function App() {
  return (
    <div className="flex h-[873px] w-[1748px] overflow-hidden">
      <div className="relative flex h-full w-[953px] flex-col overflow-hidden bg-[#444644] text-[12px] leading-4 tracking-[-0.250px] whitespace-nowrap text-[#c6c6c2] [font-family:'Open_Sans',sans-serif]">
        <MenuBar />
        <Toolbar />
        <Shelf />
        <div className="flex h-[645px] shrink-0 border-t-2 border-[#373737] bg-[#373737]">
          <ToolBox />
          <div className="w-0.5" />
          <Outliner />
          <div className="w-[5px]" />
          <Viewport />
          <div className="w-[5px]" />
          <Attributes />
        </div>
        <Timeline />
        <div className="pointer-events-none absolute inset-y-0 right-0 w-10 border-r-2 border-[#6a6a6a] bg-linear-to-r from-transparent to-black/40" />
      </div>
      <Explorer />
    </div>
  );
}
